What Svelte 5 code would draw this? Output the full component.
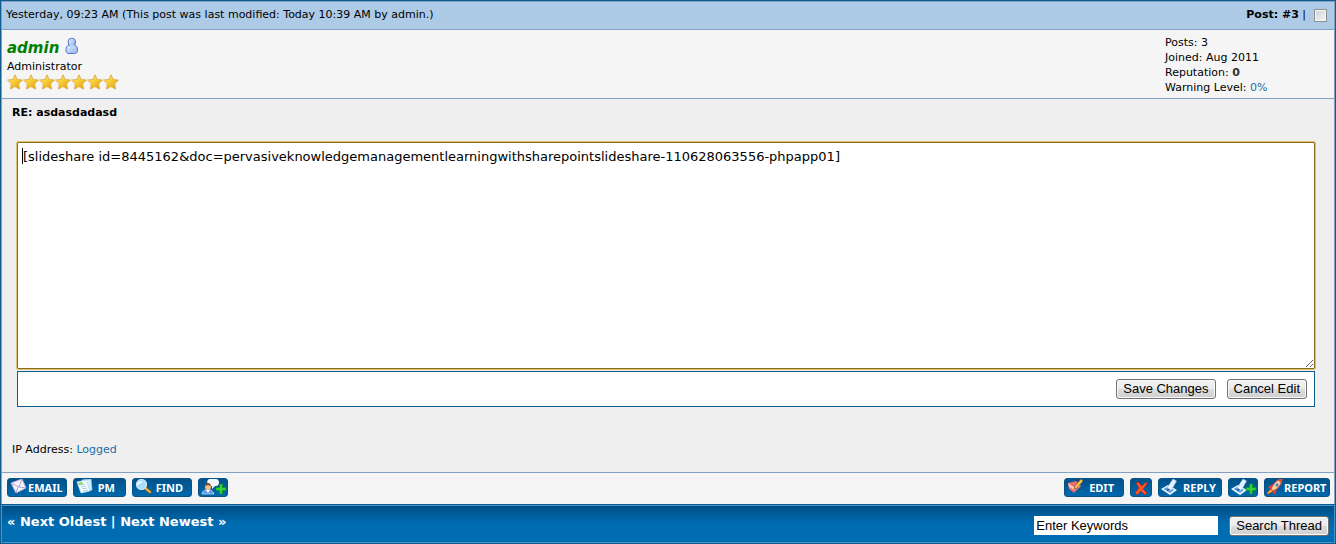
<script>
  let message = $state('[slideshare id=8445162&doc=pervasiveknowledgemanagementlearningwithsharepointslideshare-110628063556-phpapp01]');
  let keywords = $state('Enter Keywords');
  let selected = $state(false);

  const stars = [0, 1, 2, 3, 4, 5, 6];
</script>

{#snippet plus()}
  <path d="M18.500 5h3v3.500H25v3h-3.500V15h-3v-3.500H15v-3h3.500z" fill="#2fd43a" stroke="#0c8f1c" stroke-width=".7" />
{/snippet}

{#snippet pen()}
  <path d="m0 10 7-4 9 5-7 5z" fill="#f4faff" />
  <path d="m2.500 10 4.500-2.500 6 3.500-4 3z" fill="#4f9fe6" />
  <path d="m6 9 6-9 3.500 2-5 9-3.500 1z" fill="#e6f2fc" stroke="#9cc4e8" stroke-width=".6" />
  <path d="m6 12 .5-3 3 2z" fill="#2b4c74" />
{/snippet}

<div class="thread">
  <article class="post">
    <header class="post-head">
      <span>Yesterday, 09:23 AM (This post was last modified: Today 10:39 AM by admin.)</span>
      <span class="post-number">
        <span><strong>Post: <a href="#pid3">#3</a></strong> |</span>
        <input type="checkbox" aria-label="Select post" bind:checked={selected} />
      </span>
    </header>

    <section class="author">
      <div>
        <div class="name">
          <a href="#admin">admin</a>
          <svg width="14" height="18" viewBox="0 0 14 18" aria-label="Online" role="img">
            <defs>
              <linearGradient id="buddy" x1="0" y1="0" x2="1" y2="1">
                <stop offset="0" stop-color="#e5f1ff" />
                <stop offset="1" stop-color="#8db2ee" />
              </linearGradient>
            </defs>
            <path d="M4 8C2 8.500 1 10 1 13c0 2.500 1 3.500 3 3.500h5.500c2 0 3-1 3-3.500 0-3-1-4.500-3-5z" fill="url(#buddy)" stroke="#5578c4" />
            <circle cx="6.800" cy="5" r="3.800" fill="url(#buddy)" stroke="#5578c4" />
            <path d="M4.500 8.500h4.600" stroke="#bcd4f7" stroke-width="1.500" />
          </svg>
        </div>
        <div class="title">Administrator</div>
        <div class="stars">
          {#each stars as star (star)}
            <svg width="16" height="16" viewBox="0 0 16 16" aria-hidden="true">
              <defs>
                <linearGradient id="gold{star}" x1="0" y1="0" x2="1" y2="1">
                  <stop offset="0" stop-color="#fff08a" />
                  <stop offset=".5" stop-color="#f7ca2d" />
                  <stop offset="1" stop-color="#dd9612" />
                </linearGradient>
              </defs>
              <path d="m8 .7 2.200 4.800 5.300.6-3.900 3.600 1 5.400L8 12.500l-4.600 2.600 1-5.400L.5 6.100l5.300-.6z" fill="url(#gold{star})" stroke="#d9a441" stroke-width=".8" stroke-linejoin="round" />
            </svg>
          {/each}
        </div>
      </div>
      <div class="stats">
        <div>Posts: 3</div>
        <div>Joined: Aug 2011</div>
        <div>Reputation: <strong>0</strong></div>
        <div>Warning Level: <a href="#warnings">0%</a></div>
      </div>
    </section>

    <section class="body">
      <strong class="subject">RE: asdasdadasd</strong>
      <form class="quick-edit" onsubmit={(e) => e.preventDefault()}>
        <div class="field">
          <textarea aria-label="Message" spellcheck="false" bind:value={message}></textarea>
          <span class="caret"></span>
        </div>
        <div class="edit-actions">
          <button class="native" type="submit">Save Changes</button>
          <button class="native" type="button">Cancel Edit</button>
        </div>
      </form>
      <div class="ip">IP Address: <a href="#ip">Logged</a></div>
    </section>

    <footer class="post-foot">
      <div class="buttons">
        <button class="pill email">
          <svg width="18" height="18" viewBox="0 0 18 18" aria-hidden="true">
            <path d="m1 4 11-4 4 9-10 5z" fill="#f6f3fc" stroke="#b7b0d8" />
            <path d="m1 4 8 4 3-8M6 14l2-6m8 1L9 8" fill="none" stroke="#9a92c6" stroke-width=".8" />
          </svg>
          EMAIL
        </button>
        <button class="pill pm">
          <svg width="18" height="18" viewBox="0 0 18 18" aria-hidden="true">
            <path d="m6 1 9-1 1 11-7 1z" fill="#d5edfb" stroke="#9bcbe8" stroke-width=".8" />
            <path d="m1 3 9-2 4 11-9 2z" fill="#f8fdff" stroke="#b3d9ec" stroke-width=".8" />
            <path d="m4 6 5-1M5 8l5-1m-4 3 5-1m-4 3 5-1" stroke="#8ac5dd" stroke-width=".8" />
            <path d="m2 4 4-1 1 2-4 1z" fill="#8ccf66" />
          </svg>
          PM
        </button>
        <button class="pill find">
          <svg width="18" height="18" viewBox="0 0 18 18" aria-hidden="true">
            <path d="m10 9 5 4" stroke="#8e5921" stroke-width="3.500" stroke-linecap="round" />
            <path d="m10 9 5 4" stroke="#f0b04b" stroke-width="2" stroke-linecap="round" />
            <circle cx="6.500" cy="5.500" r="5" fill="#a8ddfb" stroke="#cfe9fa" stroke-width="1.200" />
            <path d="M3 6c0-2 2-3 4-3" fill="none" stroke="#fff" stroke-width="1.500" />
          </svg>
          FIND
        </button>
        <button class="pill small" aria-label="Add to buddy list">
          <svg width="26" height="18" viewBox="0 0 26 18" aria-hidden="true">
            <path d="M9 0h6c4 0 4 7 0 7h-1l-3 3V7C5 7 5 0 9 0z" fill="#f1f7ff" />
            <path d="M1 15c0-6 11-6 12 0z" fill="#5c9be5" stroke="#c8def7" stroke-width=".7" />
            <path d="m5 11 2 3 2-3z" fill="#fff" />
            <circle cx="7" cy="8" r="3" fill="#f3bf8d" />
            <path d="M4 7c0-4 6-4 6 0-2-1-4-1-6 0z" fill="#8c4b1f" />
            {@render plus()}
          </svg>
        </button>
      </div>
      <div class="buttons">
        <button class="pill edit">
          <svg width="18" height="18" viewBox="0 0 18 18" aria-hidden="true">
            <path d="m1 4 8-2 5 5-7 7-5-4z" fill="#e66d70" />
            <path d="m1 4 6 4 7-1-7 4-5-3z" fill="#ffc0b8" />
            <path d="m8 7 6-7 2 2-6 7-3 1z" fill="#f7c64b" stroke="#a25a20" stroke-width=".8" />
          </svg>
          EDIT
        </button>
        <button class="pill delete" aria-label="Delete">
          <svg width="16" height="18" viewBox="0 0 16 18" aria-hidden="true">
            <path d="m3 4 2-1 4 4 4-4 1 2-4 5 4 4-2 2-4-4-4 4-2-2 4-5z" fill="#ff552b" stroke="#b92914" stroke-width=".8" />
          </svg>
        </button>
        <button class="pill reply">
          <svg width="18" height="18" viewBox="0 0 18 18" aria-hidden="true">{@render pen()}</svg>
          REPLY
        </button>
        <button class="pill small" aria-label="Multiquote">
          <svg width="26" height="18" viewBox="0 0 26 18" aria-hidden="true">
            {@render pen()}
            {@render plus()}
          </svg>
        </button>
        <button class="pill report">
          <svg width="18" height="18" viewBox="0 0 18 18" aria-hidden="true">
            <path d="m5 10-4 4 1 1 5-3z" fill="#ffbb36" stroke="#e55b18" />
            <path d="M7 5 2 8l3 3zm4 5-2 6-3-4z" fill="#e0402c" />
            <path d="M5 10C7 5 11 0 16 0c0 5-4 10-9 12z" fill="#fac4a6" stroke="#d9502f" />
            <path d="m12 1 4 4V0z" fill="#e9472b" />
            <circle cx="11" cy="6" r="1.500" fill="#3f83bd" />
          </svg>
          REPORT
        </button>
      </div>
    </footer>
  </article>

  <nav class="thread-foot">
    <strong>« <a href="#oldest">Next Oldest</a> | <a href="#newest">Next Newest</a> »</strong>
    <form class="search" onsubmit={(e) => e.preventDefault()}>
      <input type="text" aria-label="Search this thread" bind:value={keywords} />
      <button class="native">Search Thread</button>
    </form>
  </nav>
</div>

<style>
  :global(body) { margin: 0; background: #efefef; }
  * { box-sizing: border-box; }
  .thread {
    border: 1px solid #0f5c8e;
    background: #efefef;
    color: #000;
    font: 11px/15px Verdana, "DejaVu Sans", sans-serif;
  }
  a { color: #1a6ca8; text-decoration: none; }
  button { cursor: pointer; }

  .post { border: 1px solid #81a2c4; border-bottom: 0; }
  .post-head {
    display: flex;
    justify-content: space-between;
    align-items: center;
    height: 28px;
    padding: 0 7px 2px 4px;
    background: #adcbe7;
    border-bottom: 1px solid #81a2c4;
  }
  .post-number { display: flex; align-items: center; gap: 8px; }
  .post-number a { color: #000; }
  .post-number input {
    appearance: none;
    width: 13px;
    height: 13px;
    margin: 2px 0 0;
    border: 1px solid #8e8f8f;
    background: linear-gradient(135deg, #cdd0d4, #f8f8f8);
    box-shadow: inset 0 0 0 1px #f6f6f6;
  }
  .post-number input:checked { background: #1a6ca8; }

  .author {
    display: flex;
    justify-content: space-between;
    padding: 5px;
    height: 69px;
    background: #f5f5f5;
    border-bottom: 1px solid #81a2c4;
  }
  .name { display: flex; gap: 6px; height: 25px; align-items: center; }
  .name a { color: #008000; font-size: 15px; line-height: 20px; font-weight: bold; font-style: italic; }
  .name svg { margin-bottom: 3px; }
  .title { line-height: 14px; }
  .stars { display: flex; }
  .stats { width: 164px; }
  .stats strong { color: #333; }

  .body { padding: 6px 10px 15px; }
  .quick-edit { margin: 22px 9px 35px 5px; }
  .field { position: relative; }
  textarea {
    display: block;
    width: 100%;
    height: 227px;
    padding: 4px 5px;
    border: 1px solid #8a6d1f;
    border-radius: 1px;
    outline: 1px solid #e0c36f;
    outline-offset: 0;
    background: #fff;
    color: #000;
    font: 13px/19px Verdana, "DejaVu Sans", sans-serif;
  }
  .caret { position: absolute; left: 5px; top: 6px; width: 1px; height: 16px; background: #000; }
  .edit-actions {
    display: flex;
    justify-content: flex-end;
    gap: 11px;
    margin-top: 2px;
    padding: 7px;
    background: #fff;
    border: 1px solid #0f5c8e;
  }
  .native {
    height: 20px;
    padding: 0 6px;
    border: 1px solid #707070;
    border-radius: 3px;
    background: linear-gradient(#f2f2f2 0%, #ebebeb 50%, #dddddd 50%, #cfcfcf 100%);
    box-shadow: inset 0 0 0 1px #fafafa;
    color: #000;
    font: 13px/18px "Liberation Sans", Arial, sans-serif;
  }

  .post-foot {
    display: flex;
    justify-content: space-between;
    height: 33px;
    padding: 5px 4px 5px 5px;
    background: #f5f5f5;
    border-top: 1px solid #81a2c4;
  }
  .buttons { display: flex; gap: 6px; }
  .pill {
    display: flex;
    align-items: center;
    justify-content: space-between;
    height: 19px;
    padding: 0 5px 0 2px;
    border: 1px solid #0a5285;
    border-radius: 3px;
    background: linear-gradient(#00528a, #0068ac);
    color: #fff;
    font: bold 11px/16px "Noto Sans", sans-serif;
  }
  .email { width: 60px; padding-right: 4px; }
  .pm { width: 53px; padding-right: 10px; }
  .find { width: 60px; padding-right: 8px; }
  .small { width: 30px; }
  .edit { width: 60px; padding-right: 9px; }
  .delete { width: 22px; }
  .reply { width: 64px; }
  .report { width: 66px; padding: 0 4px 0 1px; }
  .pill svg { flex: none; }

  .thread-foot {
    display: flex;
    justify-content: space-between;
    height: 38px;
    padding: 8px 5px 6px;
    border: 1px solid #4a93c9;
    background: linear-gradient(#004e87, #006cb1 50%, #006cb1);
    box-shadow: 0 -1px #0f5c8e;
    color: #fff;
    font-size: 13px;
  }
  .thread-foot a { color: #fff; }
  .search { display: flex; align-items: center; gap: 11px; padding-top: 1px; }
  .search input {
    width: 184px;
    height: 19px;
    padding: 0 2px;
    border: 0;
    color: #000;
    font: 13px/18px "Liberation Sans", Arial, sans-serif;
  }
</style>
